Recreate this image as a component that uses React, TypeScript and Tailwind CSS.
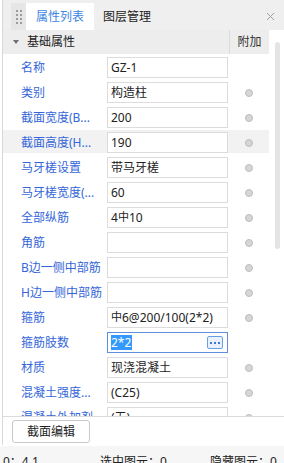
import React from "react";

type Row = {
  label: string;
  value: string;
  dot?: boolean;
  hl?: boolean;
  focused?: boolean;
  rebar?: boolean;
};

const rows: Row[] = [
  { label: "名称", value: "GZ-1" },
  { label: "类别", value: "构造柱", dot: true },
  { label: "截面宽度(B...", value: "200", dot: true },
  { label: "截面高度(H...", value: "190", dot: true, hl: true },
  { label: "马牙槎设置", value: "带马牙槎", dot: true },
  { label: "马牙槎宽度(...", value: "60", dot: true },
  { label: "全部纵筋", value: "4|10", dot: true, rebar: true },
  { label: "角筋", value: "", dot: true },
  { label: "B边一侧中部筋", value: "", dot: true },
  { label: "H边一侧中部筋", value: "", dot: true },
  { label: "箍筋", value: "|6@200/100(2*2)", dot: true, rebar: true },
  { label: "箍筋肢数", value: "2*2", focused: true },
  { label: "材质", value: "现浇混凝土", dot: true },
  { label: "混凝土强度...", value: "(C25)", dot: true },
  { label: "混凝土外加剂", value: "(无)", dot: true },
];

function Value({ row }: { row: Row }) {
  if (row.rebar) {
    const [a, b] = row.value.split("|");
    return (
      <span className="flex items-center">
        {a}
        <span className="text-[11px] leading-[13px] -mt-[2px]">中</span>
        {b}
      </span>
    );
  }
  return <span>{row.value}</span>;
}

export default function App() {
  return (
    <div className="w-[284px] h-[463px] overflow-hidden bg-white font-['Noto_Sans','Noto_Sans_CJK_SC',sans-serif] text-[12px] text-[#222]">
      <div className="ml-[2px] h-[445px] border-l border-[#d8d8d8] flex flex-col">
        {/* tab bar */}
        <div className="h-[30px] bg-[#efefef] flex items-end shrink-0">
          <div className="ml-[8px] w-[15px] h-[27px] bg-[#e6e6e6] flex items-center justify-center">
            <div className="grid grid-cols-2 gap-x-[2px] gap-y-[2px]">
              {Array.from({ length: 8 }).map((_, i) => (
                <div key={i} className="w-[2px] h-[2px] bg-[#9a9a9a]" />
              ))}
            </div>
          </div>
          <div className="w-[68px] h-[27px] bg-white flex items-center justify-center text-[#3d86e4] leading-[16px]">
            属性列表
          </div>
          <div className="w-[66px] h-[27px] flex items-center justify-center text-[#222] leading-[16px]">
            图层管理
          </div>
          <div className="flex-1 h-[27px] flex items-center justify-end pr-[9px]">
            <svg width="9" height="9" viewBox="0 0 9 9">
              <path d="M1 1L8 8M8 1L1 8" stroke="#a0a0a0" strokeWidth="1" />
            </svg>
          </div>
        </div>

        {/* content */}
        <div className="h-[386px] flex shrink-0 overflow-hidden">
          <div className="w-[266px] flex flex-col">
            <div className="h-[24px] bg-[#ededed] flex items-center shrink-0">
              <div className="w-[24px] flex justify-center pl-[2px]">
                <svg width="6" height="4" viewBox="0 0 6 4">
                  <path d="M0 0H6L3 4Z" fill="#707070" />
                </svg>
              </div>
              <div className="w-[202px] leading-[16px] text-[#222]">基础属性</div>
              <div className="flex-1 h-full border-l border-[#dcdcdc] flex items-center justify-center text-[#333] leading-[16px]">
                附加
              </div>
            </div>
            <div className="pt-[1px]">
              {rows.map((r, i) => (
                <div key={i} className="h-[25px]">
                  <div
                    className={`h-[23px] pt-[2px] flex ${r.hl ? "bg-[#f2f2f2]" : ""}`}
                  >
                    <div className="w-[104px] pl-[18px] h-[21px] flex items-center text-[#3466d9] leading-[16px] whitespace-nowrap overflow-hidden">
                      {r.label}
                    </div>
                    <div
                      className={`w-[121px] h-[21px] flex items-center pl-[3px] bg-white leading-[16px] whitespace-nowrap ${
                        r.focused ? "border border-[#5d8fdc]" : "border border-[#dcdcdc]"
                      }`}
                    >
                      {r.focused ? (
                        <>
                          <span className="bg-[#3399ff] text-white leading-[15px] pr-[1px]">
                            2*2
                          </span>
                          <div className="ml-auto mr-[4px] w-[16px] h-[13px] rounded-[2px] border border-[#6b9de3] bg-[#e9f1fc] flex items-center justify-center gap-[2px]">
                            <div className="w-[2px] h-[2px] bg-[#3b78d8]" />
                            <div className="w-[2px] h-[2px] bg-[#3b78d8]" />
                            <div className="w-[2px] h-[2px] bg-[#3b78d8]" />
                          </div>
                        </>
                      ) : (
                        <Value row={r} />
                      )}
                    </div>
                    <div className="flex-1 h-[21px] flex items-center justify-center pl-[1px]">
                      {r.dot && (
                        <div className="w-[8px] h-[8px] rounded-full bg-[#d6d6d6] border border-[#bdbdbd]" />
                      )}
                    </div>
                  </div>
                </div>
              ))}
            </div>
          </div>
          <div className="flex-1">
            <div className="ml-[6px] mt-[12px] w-[5px] h-[207px] rounded-full bg-[#e4e4e4]" />
          </div>
        </div>

        {/* bottom */}
        <div className="flex-1 border-t border-[#dcdcdc] pt-[3px] pl-[9px]">
          <button className="w-[78px] h-[23px] rounded-[3px] border border-[#c9c9c9] bg-white text-[#222] leading-[16px] flex items-center justify-center">
            截面编辑
          </button>
        </div>
      </div>
      {/* status bar */}
      <div className="mt-[1px] h-[17px] bg-[#f6f6f6] flex pt-[8px] leading-[16px] text-[#222] whitespace-nowrap">
        <div className="w-[100px] pl-[3px]">0：4.1</div>
        <div className="w-[110px]">选中图元：0</div>
        <div>隐藏图元：0</div>
      </div>
    </div>
  );
}
